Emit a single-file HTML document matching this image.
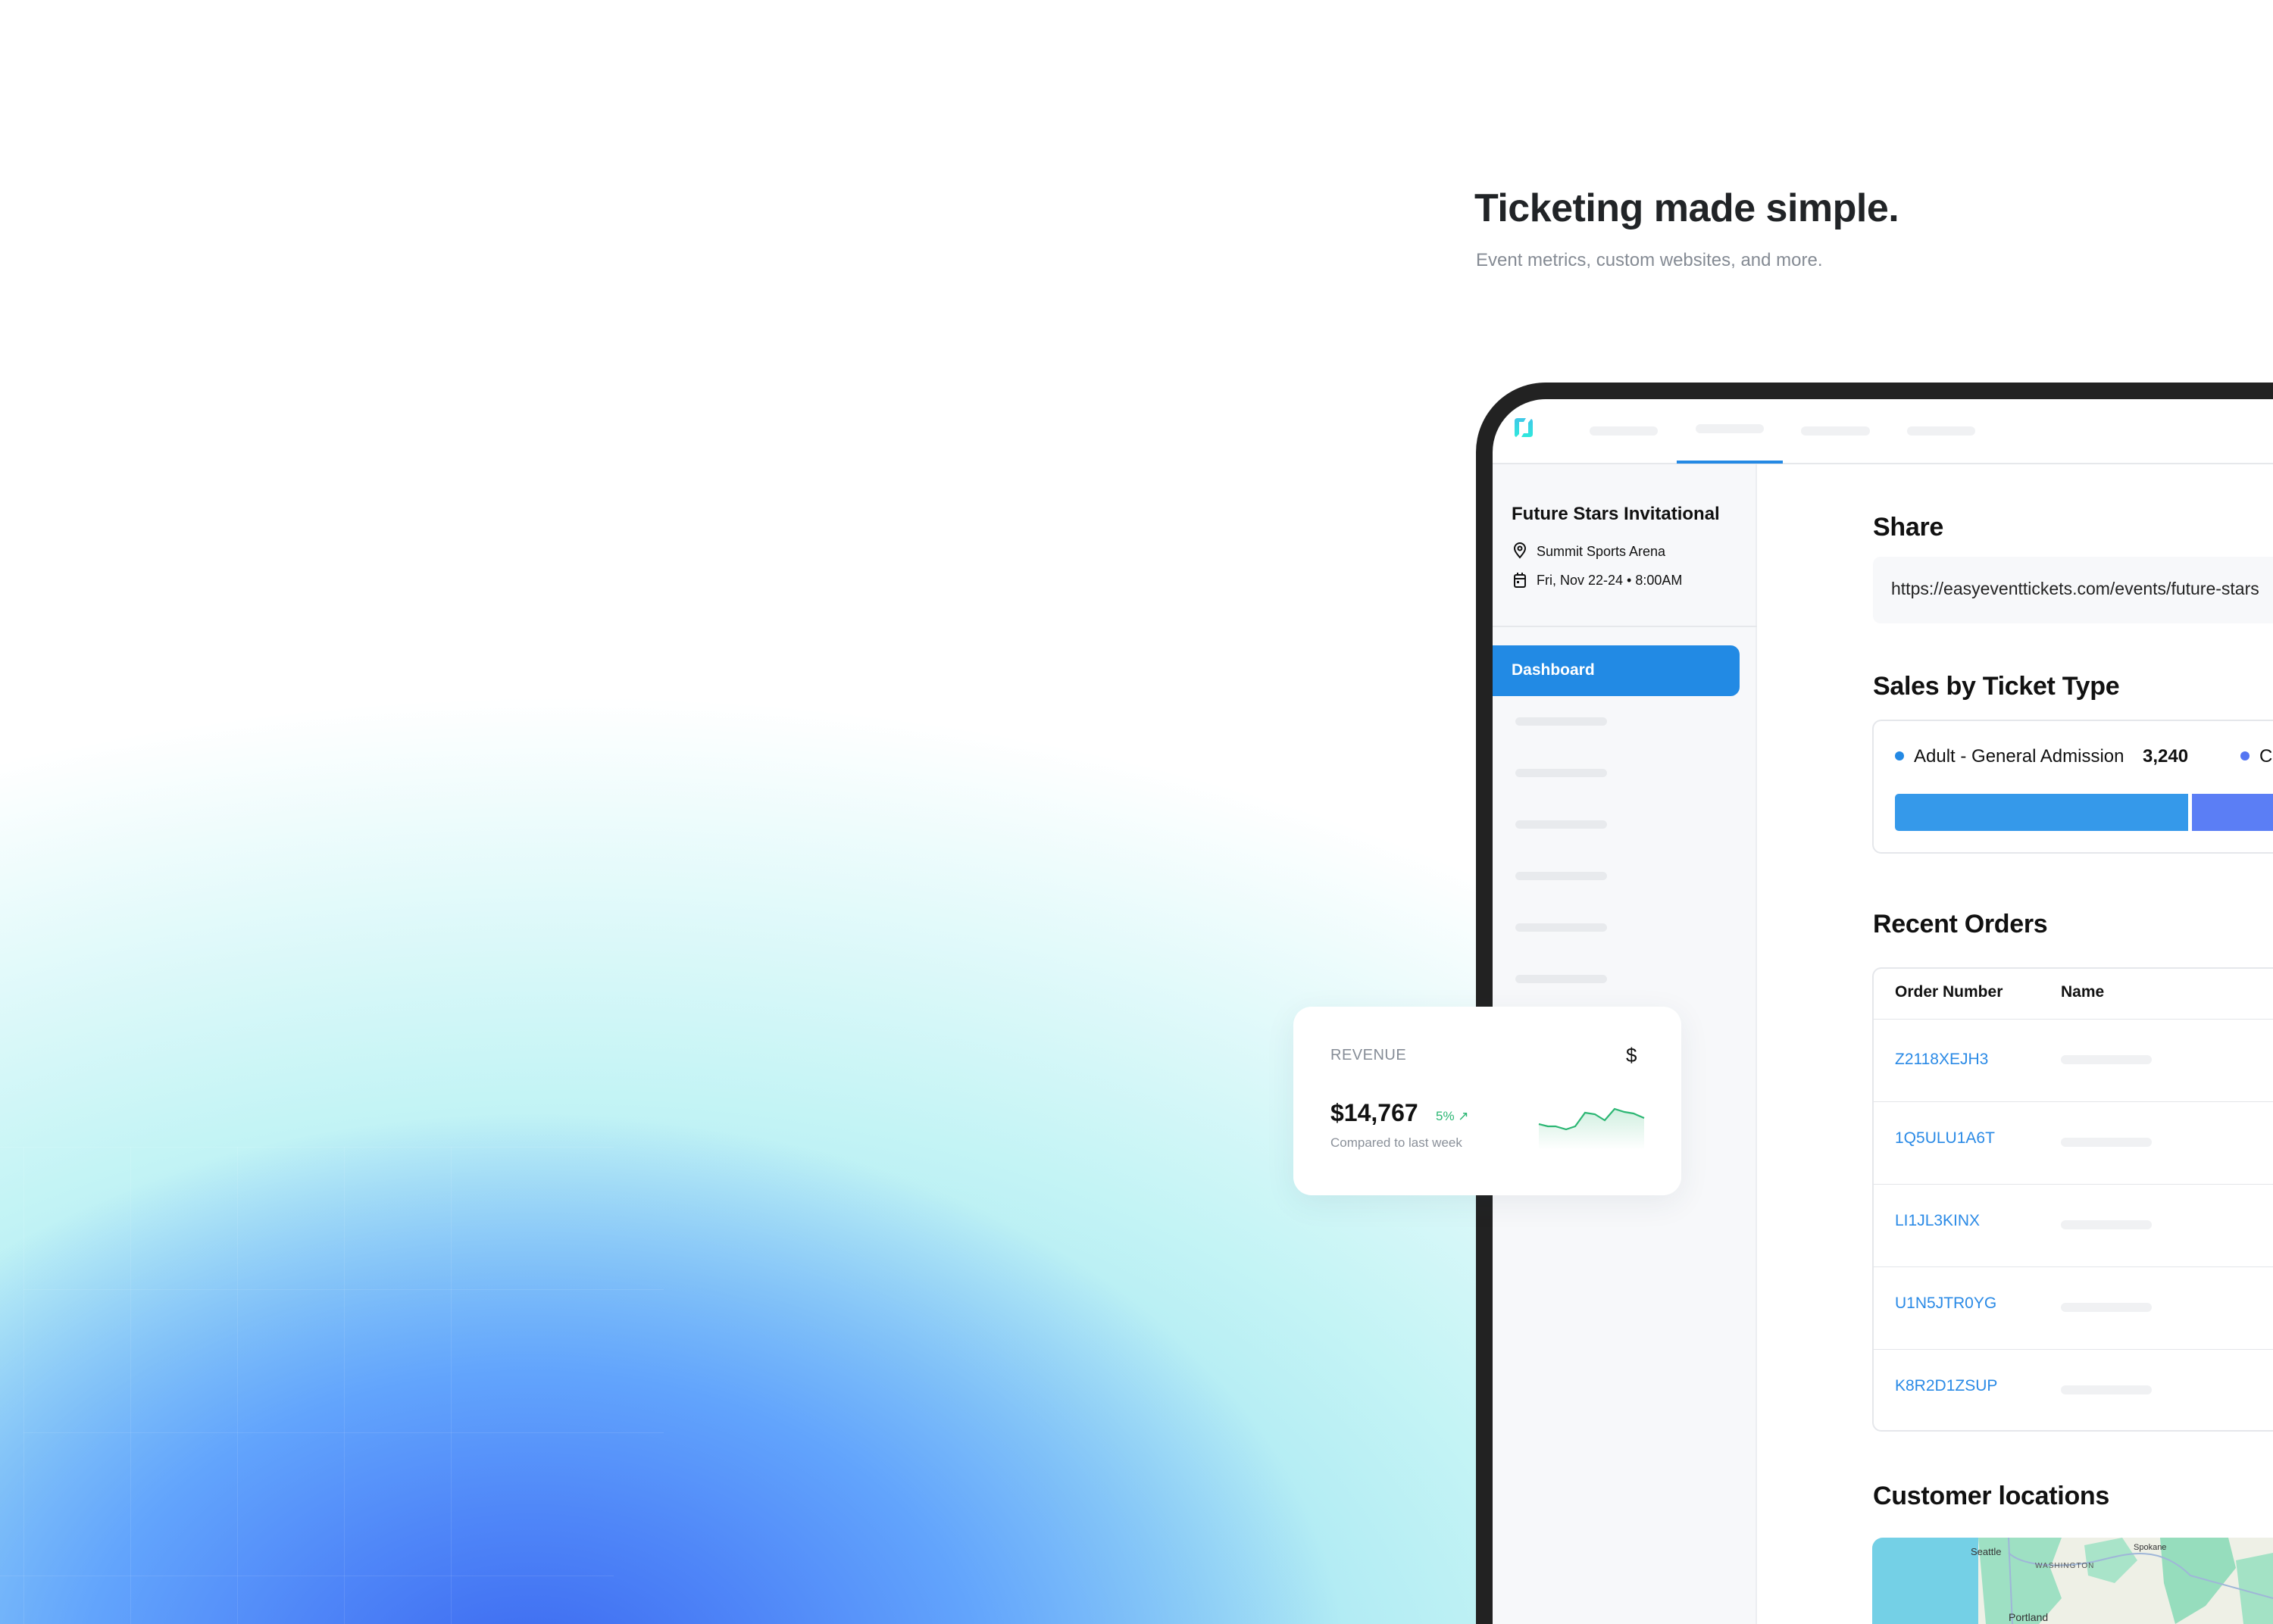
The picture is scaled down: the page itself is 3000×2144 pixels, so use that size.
<!DOCTYPE html>
<html><head><meta charset="utf-8">
<style>
*{margin:0;padding:0;box-sizing:border-box}
html,body{width:3000px;height:2144px;overflow:hidden;background:#fff;font-family:"Liberation Sans",sans-serif}
#wrap{position:relative;width:3000px;height:2144px;overflow:hidden}
.abs{position:absolute}
#bg{position:absolute;left:0;top:0;width:3000px;height:2144px;
background:
radial-gradient(ellipse 1080px 760px at 700px 2230px,#3a66ef 0%,#4f86f8 30%,#62a4fc 55%,rgba(120,190,250,0) 100%),
radial-gradient(ellipse 2150px 1380px at 750px 2300px,#8dd3f7 0%,#a6e6f3 40%,#c4f4f5 62%,rgba(255,255,255,0) 100%);}
.gl{position:absolute;background:rgba(255,255,255,0.1)}
.ph{position:absolute;background:#eef0f3;border-radius:8px}
.h2{position:absolute;font-weight:bold;color:#111;font-size:34px;letter-spacing:-0.3px;white-space:nowrap}
.row{position:absolute;left:2472px;width:528px;height:1px;background:#e3e5e9}
.ord{position:absolute;left:2501px;color:#2a8ae6;font-size:21px}
</style></head><body><div id="wrap">
<div id="bg"></div>
<div class="gl" style="left:31px;top:1514px;width:1px;height:630px"></div>
<div class="gl" style="left:172px;top:1514px;width:1px;height:630px"></div>
<div class="gl" style="left:313px;top:1514px;width:1px;height:630px"></div>
<div class="gl" style="left:454px;top:1514px;width:1px;height:630px"></div>
<div class="gl" style="left:595px;top:1514px;width:1px;height:630px"></div>
<div class="gl" style="left:0;top:1514px;width:810px;height:1px"></div>
<div class="gl" style="left:31px;top:1702px;width:845px;height:1px"></div>
<div class="gl" style="left:31px;top:1891px;width:845px;height:1px"></div>
<div class="gl" style="left:0;top:2080px;width:810px;height:1px"></div>

<div class="abs" style="left:1946px;top:245px;font-size:52px;font-weight:bold;color:#212427;letter-spacing:-0.5px;white-space:nowrap">Ticketing made simple.</div>
<div class="abs" style="left:1948px;top:330px;font-size:24px;color:#858b94;white-space:nowrap">Event metrics, custom websites, and more.</div>

<div class="abs" style="left:1948px;top:505px;width:1052px;height:1639px;background:#222;border-radius:92px 0 0 0"></div>
<div class="abs" style="left:1970px;top:527px;width:1030px;height:1617px;background:#fff;border-radius:70px 0 0 0"></div>
<svg class="abs" style="left:1990px;top:540px" width="50" height="50" viewBox="0 0 50 50">
<defs><linearGradient id="lg" x1="0" y1="0" x2="0" y2="1"><stop offset="0" stop-color="#40c8e8"/><stop offset="1" stop-color="#2ee8dc"/></linearGradient></defs>
<path d="M9 16 Q9 12 13 12 H24 L21 17 H15 V33 L11 37 Q9 36 9 34 Z" fill="url(#lg)"/>
<path d="M31 13 Q33 14 33 17 V33 Q33 37 29 37 H18 L21 32 H27 V18 Z" fill="url(#lg)"/>
</svg>
<div class="ph" style="left:2098px;top:563px;width:90px;height:12px;background:#f0f1f3"></div>
<div class="ph" style="left:2238px;top:560px;width:90px;height:12px;background:#f0f1f3"></div>
<div class="ph" style="left:2377px;top:563px;width:91px;height:12px;background:#f0f1f3"></div>
<div class="ph" style="left:2517px;top:563px;width:90px;height:12px;background:#f0f1f3"></div>
<div class="abs" style="left:1970px;top:611px;width:1030px;height:2px;background:#e6e8eb"></div>
<div class="abs" style="left:2213px;top:608px;width:140px;height:4px;background:#2489e4"></div>
<div class="abs" style="left:1970px;top:613px;width:349px;height:1531px;background:#f7f8fa;border-right:2px solid #eceef1"></div>
<div class="abs" style="left:1995px;top:665px;font-size:24px;font-weight:bold;color:#111;white-space:nowrap">Future Stars Invitational</div>
<svg class="abs" style="left:1997px;top:716px" width="18" height="22" viewBox="0 0 18 22"><path d="M9 20 C4 14 2 11 2 8 A7 7 0 0 1 16 8 C16 11 14 14 9 20Z" fill="none" stroke="#111" stroke-width="2"/><circle cx="9" cy="8" r="2.5" fill="none" stroke="#111" stroke-width="2"/></svg>
<div class="abs" style="left:2028px;top:718px;font-size:18px;color:#111;white-space:nowrap">Summit Sports Arena</div>
<svg class="abs" style="left:1997px;top:755px" width="18" height="22" viewBox="0 0 18 22"><rect x="2" y="4" width="14" height="16" rx="2" fill="none" stroke="#111" stroke-width="2"/><line x1="2" y1="9" x2="16" y2="9" stroke="#111" stroke-width="2"/><line x1="6" y1="1" x2="6" y2="5" stroke="#111" stroke-width="2"/><line x1="12" y1="1" x2="12" y2="5" stroke="#111" stroke-width="2"/><rect x="5" y="12" width="3" height="3" fill="#111"/></svg>
<div class="abs" style="left:2028px;top:756px;font-size:18px;color:#111;white-space:nowrap">Fri, Nov 22-24 • 8:00AM</div>
<div class="abs" style="left:1970px;top:826px;width:349px;height:2px;background:#e6e8eb"></div>
<div class="abs" style="left:1970px;top:852px;width:326px;height:67px;background:#228ae4;border-radius:0 12px 12px 0"></div>
<div class="abs" style="left:1995px;top:873px;font-size:21px;color:#fff;font-weight:bold">Dashboard</div>
<div class="ph" style="left:2000px;top:947px;width:121px;height:11px;background:#e8eaed"></div>
<div class="ph" style="left:2000px;top:1015px;width:121px;height:11px;background:#e8eaed"></div>
<div class="ph" style="left:2000px;top:1083px;width:121px;height:11px;background:#e8eaed"></div>
<div class="ph" style="left:2000px;top:1151px;width:121px;height:11px;background:#e8eaed"></div>
<div class="ph" style="left:2000px;top:1219px;width:121px;height:11px;background:#e8eaed"></div>
<div class="ph" style="left:2000px;top:1287px;width:121px;height:11px;background:#e8eaed"></div>
<div class="h2" style="left:2472px;top:677px">Share</div>
<div class="abs" style="left:2472px;top:735px;width:528px;height:88px;background:#f7f8fa;border-radius:10px 0 0 10px;overflow:hidden;white-space:nowrap;padding:29px 0 0 24px;font-size:23px;color:#222">https://easyeventtickets.com/events/future-stars</div>
<div class="h2" style="left:2472px;top:887px">Sales by Ticket Type</div>
<div class="abs" style="left:2471px;top:950px;width:529px;height:177px;border:2px solid #e5e7eb;border-right:none;border-radius:12px 0 0 12px"></div>
<div class="abs" style="left:2501px;top:992px;width:12px;height:12px;border-radius:50%;background:#2489e4"></div>
<div class="abs" style="left:2526px;top:985px;font-size:24px;color:#111;white-space:nowrap">Adult - General Admission</div>
<div class="abs" style="left:2828px;top:985px;font-size:24px;color:#111;font-weight:bold">3,240</div>
<div class="abs" style="left:2957px;top:992px;width:12px;height:12px;border-radius:50%;background:#5576f2"></div>
<div class="abs" style="left:2982px;top:985px;font-size:24px;color:#111">C</div>
<div class="abs" style="left:2501px;top:1048px;width:387px;height:49px;background:#3599ea;border-radius:5px 0 0 5px"></div>
<div class="abs" style="left:2893px;top:1048px;width:107px;height:49px;background:#5b7ef5"></div>
<div class="h2" style="left:2472px;top:1201px">Recent Orders</div>
<div class="abs" style="left:2471px;top:1277px;width:529px;height:613px;border:2px solid #e5e7eb;border-right:none;border-radius:12px 0 0 12px"></div>
<div class="abs" style="left:2501px;top:1298px;font-size:21px;font-weight:bold;color:#111">Order Number</div>
<div class="abs" style="left:2720px;top:1298px;font-size:21px;font-weight:bold;color:#111">Name</div>
<div class="row" style="top:1345px"></div>
<div class="row" style="top:1454px"></div>
<div class="row" style="top:1563px"></div>
<div class="row" style="top:1672px"></div>
<div class="row" style="top:1781px"></div>
<div class="ord" style="top:1387px">Z2118XEJH3</div>
<div class="ord" style="top:1491px">1Q5ULU1A6T</div>
<div class="ord" style="top:1600px">LI1JL3KINX</div>
<div class="ord" style="top:1709px">U1N5JTR0YG</div>
<div class="ord" style="top:1818px">K8R2D1ZSUP</div>
<div class="ph" style="left:2720px;top:1393px;width:120px;height:12px;background:#f0f1f3"></div>
<div class="ph" style="left:2720px;top:1502px;width:120px;height:12px;background:#f0f1f3"></div>
<div class="ph" style="left:2720px;top:1611px;width:120px;height:12px;background:#f0f1f3"></div>
<div class="ph" style="left:2720px;top:1720px;width:120px;height:12px;background:#f0f1f3"></div>
<div class="ph" style="left:2720px;top:1829px;width:120px;height:12px;background:#f0f1f3"></div>
<div class="h2" style="left:2472px;top:1956px">Customer locations</div>
<svg class="abs" style="left:2471px;top:2030px" width="529" height="114" viewBox="0 0 529 114">
<defs><clipPath id="c"><path d="M14 0 H529 V114 H0 V14 A14 14 0 0 1 14 0Z"/></clipPath></defs>
<g clip-path="url(#c)">
<rect width="529" height="114" fill="#eef0e6"/>
<path d="M140 0 H250 L235 40 L250 80 L220 114 H150 Z" fill="#9ee0c3"/>
<path d="M280 10 L330 0 L350 30 L320 60 L285 50Z" fill="#a9e4c9"/>
<path d="M380 0 H470 L480 40 L440 90 L400 114 L385 60Z" fill="#96ddbd"/>
<path d="M480 30 L529 20 V114 H490Z" fill="#a3e2c5"/>
<rect width="140" height="114" fill="#74d0e6"/>
<path d="M180 20 C200 40 260 40 300 30 S380 10 420 50 T529 80" fill="none" stroke="#9fb6d8" stroke-width="2"/>
<path d="M180 0 L185 114" stroke="#9fb6d8" stroke-width="2"/>
<text x="130" y="23" font-size="13" fill="#333" font-family="Liberation Sans">Seattle</text>
<text x="215" y="40" font-size="10" fill="#555" letter-spacing="1" font-family="Liberation Sans">WASHINGTON</text>
<text x="345" y="16" font-size="11" fill="#333" font-family="Liberation Sans">Spokane</text>
<text x="180" y="110" font-size="14" fill="#333" font-family="Liberation Sans">Portland</text>
</g></svg>

<div class="abs" style="left:1707px;top:1329px;width:512px;height:249px;background:#fff;border-radius:24px;box-shadow:0 10px 40px rgba(40,60,90,0.08)"></div>
<div class="abs" style="left:1756px;top:1382px;font-size:20px;color:#858c96;letter-spacing:0.5px">REVENUE</div>
<div class="abs" style="left:2146px;top:1378px;font-size:26px;color:#111">$</div>
<div class="abs" style="left:1756px;top:1451px;font-size:32px;font-weight:bold;color:#111">$14,767</div>
<div class="abs" style="left:1895px;top:1464px;font-size:17px;color:#2bb673">5% ↗</div>
<div class="abs" style="left:1756px;top:1499px;font-size:17px;color:#8a9099">Compared to last week</div>
<svg class="abs" style="left:2030px;top:1460px" width="142" height="60" viewBox="0 0 142 60">
<defs><linearGradient id="g" x1="0" y1="0" x2="0" y2="1"><stop offset="0" stop-color="#2bb673" stop-opacity="0.22"/><stop offset="1" stop-color="#2bb673" stop-opacity="0"/></linearGradient></defs>
<path d="M1 24 L13 27 L23 27 L37 31 L49 27 L62 9 L75 11 L88 19 L101 4 L114 8 L126 10 L140 16 L140 58 L1 58Z" fill="url(#g)"/>
<path d="M1 24 L13 27 L23 27 L37 31 L49 27 L62 9 L75 11 L88 19 L101 4 L114 8 L126 10 L140 16" fill="none" stroke="#2bb673" stroke-width="2.2"/>
</svg>
</div></body></html>
